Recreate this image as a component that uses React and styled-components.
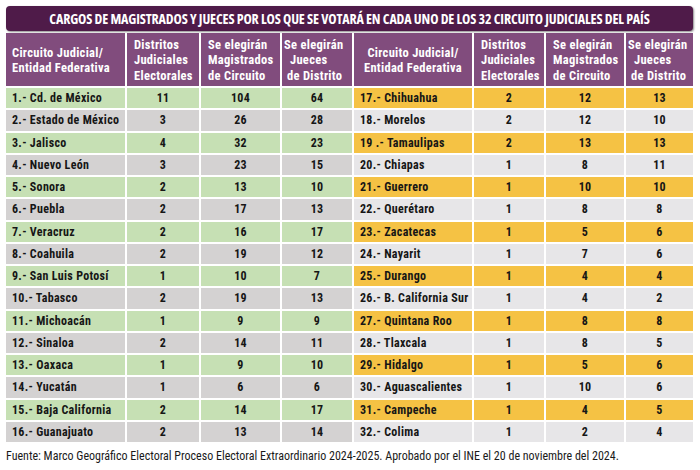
import React from "react";
import styled, { createGlobalStyle } from "styled-components";

const Global = createGlobalStyle`
  html, body { margin: 0; padding: 0; background: #ffffff; }
  body { width: 700px; height: 470px; overflow: hidden; }
`;

const RC = `"Roboto Condensed", "Roboto", sans-serif`;
const OSC = `"Open Sans", "Roboto Condensed", sans-serif`;

const Page = styled.div`
  padding: 6px 7px 0 6px;
  font-family: ${RC};
  font-stretch: condensed;
  color: #161616;
`;

const TitleBar = styled.div`
  height: 25px;
  background: #4f1b49;
  border-radius: 4px;
  box-shadow: 1px 1px 2px rgba(0, 0, 0, 0.45);
  display: flex;
  align-items: center;
  justify-content: center;
  color: #ffffff;
  font-family: ${OSC};
  font-stretch: 75%;
  font-weight: 700;
  font-size: 14px;
  letter-spacing: -0.15px;
  white-space: nowrap;
  margin-bottom: 2px;
`;

const Tables = styled.div`
  display: flex;
  gap: 2px;
`;

const Grid = styled.div`
  display: grid;
  grid-template-columns: ${(p) => p.$cols};
  grid-template-rows: 53px repeat(16, 20.25px);
  gap: 2px;
`;

const Head = styled.div`
  background: #814c7d;
  color: #ffffff;
  font-weight: 700;
  font-size: 12.5px;
  line-height: 15.5px;
  letter-spacing: 0.3px;
  display: flex;
  flex-direction: column;
  justify-content: center;
  align-items: ${(p) => (p.$center ? "center" : "flex-start")};
  text-align: ${(p) => (p.$center ? "center" : "left")};
  padding-left: ${(p) => (p.$pad != null ? p.$pad : 7)}px;
  padding-top: 1px;
`;

const HeadLine = styled.span`
  padding-left: ${(p) => p.$indent || 0}px;
  white-space: nowrap;
`;

const BG = {
  green: "#c6e0b4",
  gray: "#d4d2d2",
  orange: "#f5c244",
  light: "#e7e6e8",
};

const Cell = styled.div`
  background: ${(p) => BG[p.$tone]};
  font-weight: 700;
  font-size: 12px;
  letter-spacing: 0.3px;
  display: flex;
  align-items: center;
  justify-content: ${(p) => (p.$name ? "flex-start" : "center")};
  padding-left: ${(p) => (p.$name ? 6 : 0)}px;
  white-space: nowrap;
`;

const Footer = styled.div`
  margin-top: 6px;
  font-size: 12px;
  line-height: 16px;
  color: #1a1a1a;
  white-space: nowrap;
`;

const left = [
  ["1.- Cd. de México", 11, 104, 64],
  ["2.- Estado de México", 3, 26, 28],
  ["3.- Jalisco", 4, 32, 23],
  ["4.- Nuevo León", 3, 23, 15],
  ["5.- Sonora", 2, 13, 10],
  ["6.- Puebla", 2, 17, 13],
  ["7.- Veracruz", 2, 16, 17],
  ["8.- Coahuila", 2, 19, 12],
  ["9.- San Luis Potosí", 1, 10, 7],
  ["10.- Tabasco", 2, 19, 13],
  ["11.- Michoacán", 1, 9, 9],
  ["12.- Sinaloa", 2, 14, 11],
  ["13.- Oaxaca", 1, 9, 10],
  ["14.- Yucatán", 1, 6, 6],
  ["15.- Baja California", 2, 14, 17],
  ["16.- Guanajuato", 2, 13, 14],
];

const right = [
  ["17.- Chihuahua", 2, 12, 13],
  ["18.- Morelos", 2, 12, 10],
  ["19 .- Tamaulipas", 2, 13, 13],
  ["20.- Chiapas", 1, 8, 11],
  ["21.- Guerrero", 1, 10, 10],
  ["22.- Querétaro", 1, 8, 8],
  ["23.- Zacatecas", 1, 5, 6],
  ["24.- Nayarit", 1, 7, 6],
  ["25.- Durango", 1, 4, 4],
  ["26.- B. California Sur", 1, 4, 2],
  ["27.- Quintana Roo", 1, 8, 8],
  ["28.- Tlaxcala", 1, 8, 5],
  ["29.- Hidalgo", 1, 5, 6],
  ["30.- Aguascalientes", 1, 10, 6],
  ["31.- Campeche", 1, 4, 5],
  ["32.- Colima", 1, 2, 4],
];

function Table({ cols, rows, firstCenter, tones }) {
  return (
    <Grid $cols={cols}>
      <Head $center={firstCenter} $pad={firstCenter ? 0 : 6}>
        <HeadLine>Circuito Judicial/</HeadLine>
        <HeadLine>Entidad Federativa</HeadLine>
      </Head>
      <Head>
        <HeadLine>Distritos</HeadLine>
        <HeadLine>Judiciales</HeadLine>
        <HeadLine>Electorales</HeadLine>
      </Head>
      <Head>
        <HeadLine>Se elegirán</HeadLine>
        <HeadLine>Magistrados</HeadLine>
        <HeadLine>de Circuito</HeadLine>
      </Head>
      <Head $pad={2}>
        <HeadLine>Se elegirán</HeadLine>
        <HeadLine $indent={6}>Jueces</HeadLine>
        <HeadLine $indent={3}>de Distrito</HeadLine>
      </Head>
      {rows.map((r, i) => {
        const tone = tones[i % 2];
        return (
          <React.Fragment key={r[0]}>
            <Cell $tone={tone} $name>{r[0]}</Cell>
            <Cell $tone={tone}>{r[1]}</Cell>
            <Cell $tone={tone}>{r[2]}</Cell>
            <Cell $tone={tone}>{r[3]}</Cell>
          </React.Fragment>
        );
      })}
    </Grid>
  );
}

export default function App() {
  return (
    <>
      <Global />
      <Page>
        <TitleBar>
          CARGOS DE MAGISTRADOS Y JUECES POR LOS QUE SE VOTARÁ EN CADA UNO DE LOS 32 CIRCUITO JUDICIALES DEL PAÍS
        </TitleBar>
        <Tables>
          <Table cols="119px 72px 79px 70px" rows={left} tones={["green", "gray"]} />
          <Table cols="118px 70px 78px 67px" rows={right} firstCenter tones={["orange", "light"]} />
        </Tables>
        <Footer>
          Fuente: Marco Geográfico Electoral Proceso Electoral Extraordinario 2024-2025. Aprobado por el INE el 20 de noviembre del 2024.
        </Footer>
      </Page>
    </>
  );
}
